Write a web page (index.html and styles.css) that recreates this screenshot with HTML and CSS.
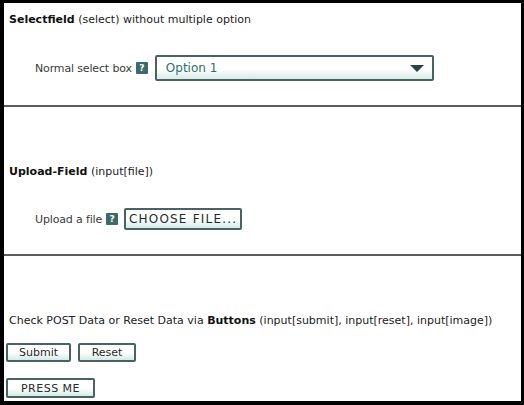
FILE: index.html
```html
<!DOCTYPE html>
<html>
<head>
<meta charset="utf-8">
<link rel="stylesheet" href="styles.css">
</head>
<body>
<div class="page">
  <section class="sec sec-first">
    <div class="heading"><b>Selectfield</b> (select) without multiple option</div>
    <div class="row row-select">
      <span class="label">Normal select box</span>
      <span class="help">?</span>
      <div class="select">
        <span class="select-text">Option 1</span>
        <svg class="arrow" width="14" height="7" viewBox="0 0 14 7"><path d="M0 0 H14 L7 7 Z" fill="#2b4444"/></svg>
      </div>
    </div>
  </section>
  <div class="rule"></div>
  <section class="sec">
    <div class="heading"><b>Upload-Field</b> (input[file])</div>
    <div class="row row-file">
      <span class="label">Upload a file</span>
      <span class="help">?</span>
      <span class="btn btn-file">CHOOSE FILE...</span>
    </div>
  </section>
  <div class="rule rule-2"></div>
  <section class="sec sec-last">
    <div class="heading">Check POST Data or Reset Data via <b>Buttons</b> (input[submit], input[reset], input[image])</div>
    <div class="btn-row">
      <span class="btn btn-submit">Submit</span>
      <span class="btn btn-reset">Reset</span>
    </div>
    <div class="btn-row btn-row-2">
      <span class="btn btn-press">PRESS ME</span>
    </div>
  </section>
</div>
</body>
</html>
```
FILE: styles.css
```css
html {
  background: #000;
  margin: 0;
  padding: 0;
}
body {
  margin: 0;
  padding: 3px 3px 4px 4px;
  background: #000;
  font-family: "DejaVu Sans", Verdana, sans-serif;
  font-size: 11px;
  color: #222;
}
.page {
  background: #fff;
  height: 398px;
  overflow: hidden;
}
.sec {
  padding-left: 5px;
}
.heading {
  line-height: 14px;
  height: 14px;
  white-space: nowrap;
  margin-top: 58px;
}
.sec-first .heading {
  margin-top: 10px;
}
.heading b {
  font-weight: bold;
  color: #111;
}
.row {
  display: flex;
  align-items: center;
  padding-left: 26px;
}
.row-select {
  margin-top: 28px;
  height: 26px;
}
.row-file {
  margin-top: 29px;
  height: 22px;
}
.label {
  color: #3a3a3a;
  margin-right: 4px;
  letter-spacing: -0.15px;
}
.help {
  display: inline-block;
  width: 12px;
  height: 12px;
  background: #3e6a6a;
  color: #fff;
  font-size: 9px;
  font-weight: bold;
  line-height: 12px;
  text-align: center;
  border-radius: 1px;
  margin-right: 7px;
}
.row-file .help {
  margin-right: 6px;
}
.select {
  box-sizing: border-box;
  width: 279px;
  height: 26px;
  border: 2px solid #4a6262;
  border-radius: 2px;
  background: linear-gradient(#fff 0%, #fff 55%, #d6ebe6 100%);
  display: flex;
  align-items: center;
  justify-content: space-between;
  padding: 0 8px 0 9px;
}
.select-text {
  color: #2e6d6d;
  font-size: 12px;
}
.arrow {
  display: block;
}
.rule {
  height: 2px;
  background: #5c5c5c;
  margin-top: 24px;
}
.rule-2 {
  margin-top: 24px;
}
.btn {
  box-sizing: border-box;
  display: inline-flex;
  align-items: center;
  justify-content: center;
  border: 2px solid #4a6262;
  border-radius: 2px;
  background: linear-gradient(#fff 0%, #fff 50%, #d3eae4 100%);
  color: #2a2a2a;
  white-space: nowrap;
}
.btn-file {
  width: 118px;
  height: 22px;
  font-size: 12px;
  letter-spacing: 1.2px;
  color: #1e2a2a;
}
.sec-last {
  padding-left: 2px;
}
.sec-last .heading {
  padding-left: 3px;
}
.btn-row {
  display: flex;
  gap: 7px;
  margin-top: 15px;
}
.btn-row-2 {
  margin-top: 16px;
}
.btn-submit {
  width: 65px;
  height: 19px;
}
.btn-reset {
  width: 58px;
  height: 19px;
}
.btn-press {
  width: 89px;
  height: 20px;
  letter-spacing: 0.5px;
}
```
